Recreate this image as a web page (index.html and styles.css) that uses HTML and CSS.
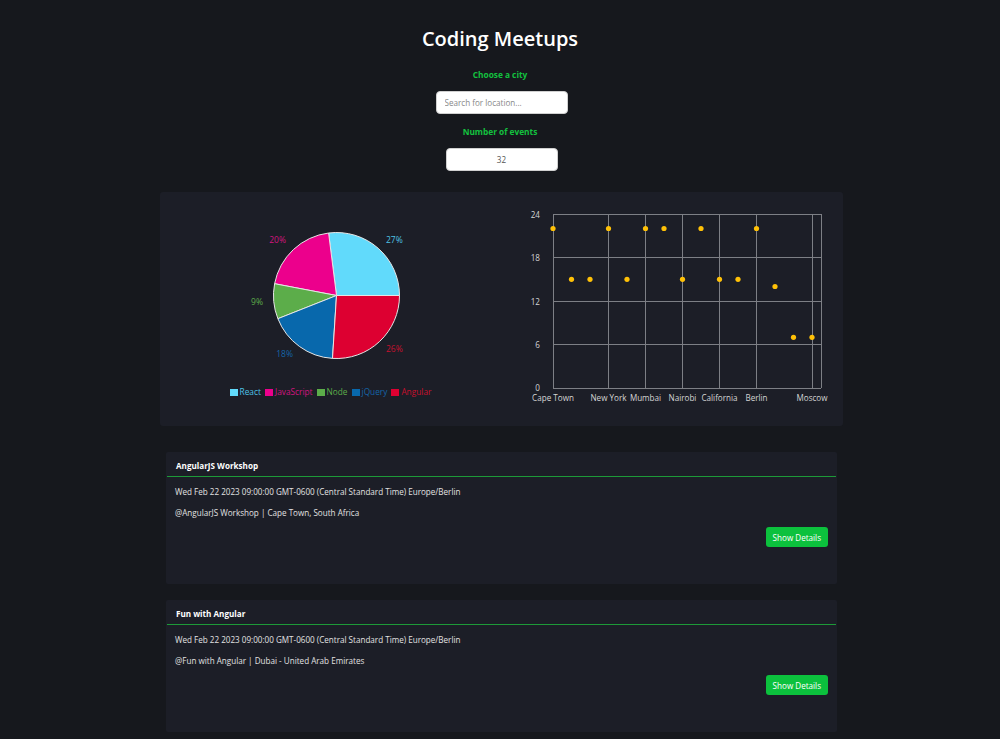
FILE: index.html
```html
<!DOCTYPE html>
<html lang="en">
<head>
<meta charset="utf-8">
<title>Coding Meetups</title>
<link rel="stylesheet" href="styles.css">
</head>
<body>
<div class="app">
  <h1 class="title">Coding Meetups</h1>

  <div class="filter">
    <label class="filter-label" for="city">Choose a city</label>
    <input id="city" class="city-input" type="text" placeholder="Search for location...">
  </div>

  <div class="filter">
    <label class="filter-label" for="num">Number of events</label>
    <input id="num" class="num-input" type="text" value="32">
  </div>

  <section class="charts">
    <div class="chart-col pie-col">
      <svg class="pie-svg" width="341" height="192" viewBox="0 0 341 192">
        <g stroke="#e6e6e6" stroke-width="1">
          <path d="M176.5 103.5 L239.5 103.5 A63 63 0 0 0 168.6 41 Z" fill="#61dafb"/>
          <path d="M176.5 103.5 L168.6 41 A63 63 0 0 0 114.6 91.7 Z" fill="#ec008c"/>
          <path d="M176.5 103.5 L114.6 91.7 A63 63 0 0 0 117.9 126.7 Z" fill="#5cad4a"/>
          <path d="M176.5 103.5 L117.9 126.7 A63 63 0 0 0 172.5 166.4 Z" fill="#0868ac"/>
          <path d="M176.5 103.5 L172.5 166.4 A63 63 0 0 0 239.5 103.5 Z" fill="#dd0031"/>
        </g>
        <g class="pie-labels">
          <text x="226" y="47" fill="#4fc3e6">27%</text>
          <text x="126" y="47" text-anchor="end" fill="#d2147f">20%</text>
          <text x="103" y="109" text-anchor="end" fill="#5cad4a">9%</text>
          <text x="133" y="161" text-anchor="end" fill="#1565a8">18%</text>
          <text x="226" y="156" fill="#c8102e">26%</text>
        </g>
      </svg>
      <ul class="legend">
        <li class="legend-item react"><span class="swatch"></span>React</li>
        <li class="legend-item js"><span class="swatch"></span>JavaScript</li>
        <li class="legend-item node"><span class="swatch"></span>Node</li>
        <li class="legend-item jq"><span class="swatch"></span>jQuery</li>
        <li class="legend-item ng"><span class="swatch"></span>Angular</li>
      </ul>
    </div>

    <div class="chart-col scatter-col">
      <svg class="scatter-svg" width="342" height="234" viewBox="0 0 342 234">
        <g class="grid" stroke="#7d7f85" stroke-width="1" fill="none">
          <line x1="52" y1="22.5" x2="320" y2="22.5"/>
          <line x1="52" y1="65.5" x2="320" y2="65.5"/>
          <line x1="52" y1="109.5" x2="320" y2="109.5"/>
          <line x1="52" y1="152.5" x2="320" y2="152.5"/>
          <line x1="107.5" y1="22" x2="107.5" y2="196"/>
          <line x1="144.5" y1="22" x2="144.5" y2="196"/>
          <line x1="181.5" y1="22" x2="181.5" y2="196"/>
          <line x1="218.5" y1="22" x2="218.5" y2="196"/>
          <line x1="255.5" y1="22" x2="255.5" y2="196"/>
          <line x1="311.5" y1="22" x2="311.5" y2="196"/>
          <line x1="320.5" y1="22" x2="320.5" y2="196"/>
          <line x1="52.5" y1="22" x2="52.5" y2="196"/>
          <line x1="52" y1="196.5" x2="320" y2="196.5"/>
        </g>
        <g class="y-ticks" text-anchor="end">
          <text x="39" y="25.5">24</text>
          <text x="39" y="69">18</text>
          <text x="39" y="112.5">12</text>
          <text x="39" y="156">6</text>
          <text x="39" y="198.5">0</text>
        </g>
        <g class="x-ticks" text-anchor="middle">
          <text x="52" y="205">Cape Town</text>
          <text x="107.5" y="205">New York</text>
          <text x="144.5" y="205">Mumbai</text>
          <text x="181.5" y="205">Nairobi</text>
          <text x="218.5" y="205">California</text>
          <text x="255.5" y="205">Berlin</text>
          <text x="311" y="205">Moscow</text>
        </g>
        <g class="dots" fill="#ffc107">
          <circle cx="52" cy="36.5" r="2.6"/>
          <circle cx="70.5" cy="87.3" r="2.6"/>
          <circle cx="89" cy="87.3" r="2.6"/>
          <circle cx="107.5" cy="36.5" r="2.6"/>
          <circle cx="126" cy="87.3" r="2.6"/>
          <circle cx="144.5" cy="36.5" r="2.6"/>
          <circle cx="163" cy="36.5" r="2.6"/>
          <circle cx="181.5" cy="87.3" r="2.6"/>
          <circle cx="200" cy="36.5" r="2.6"/>
          <circle cx="218.5" cy="87.3" r="2.6"/>
          <circle cx="237" cy="87.3" r="2.6"/>
          <circle cx="255.5" cy="36.5" r="2.6"/>
          <circle cx="274" cy="94.5" r="2.6"/>
          <circle cx="292.5" cy="145.3" r="2.6"/>
          <circle cx="311" cy="145.3" r="2.6"/>
        </g>
      </svg>
    </div>
  </section>

  <ul class="events">
    <li class="event">
      <h2 class="event-title">AngularJS Workshop</h2>
      <p class="event-date">Wed Feb 22 2023 09:00:00 GMT-0600 (Central Standard Time) Europe/Berlin</p>
      <p class="event-loc">@AngularJS Workshop | Cape Town, South Africa</p>
      <div class="event-actions"><button class="details-btn">Show Details</button></div>
    </li>
    <li class="event">
      <h2 class="event-title">Fun with Angular</h2>
      <p class="event-date">Wed Feb 22 2023 09:00:00 GMT-0600 (Central Standard Time) Europe/Berlin</p>
      <p class="event-loc">@Fun with Angular | Dubai - United Arab Emirates</p>
      <div class="event-actions"><button class="details-btn">Show Details</button></div>
    </li>
  </ul>
</div>
</body>
</html>
```

FILE: styles.css
```css
html, body {
  margin: 0;
  padding: 0;
  background: #16181d;
}

body {
  font-family: "Open Sans", "Noto Sans", sans-serif;
  color: #e4e4e4;
  overflow: hidden;
}

.app {
  display: flex;
  flex-direction: column;
  align-items: center;
  padding-top: 25px;
}

.title {
  margin: 0;
  font-size: 20px;
  line-height: 28px;
  font-weight: 600;
  color: #ffffff;
}

.filter {
  display: flex;
  flex-direction: column;
  align-items: center;
}

.filter-label {
  margin-top: 12px;
  font-size: 8.3px;
  line-height: 12px;
  font-weight: 700;
  color: #13c13f;
}

.filter:first-of-type .filter-label {
  margin-top: 16px;
}

.city-input,
.num-input {
  box-sizing: border-box;
  height: 23px;
  margin-top: 10px;
  border: 1px solid #d0d0d0;
  border-radius: 4px;
  background: #ffffff;
  font-family: inherit;
  font-size: 8.1px;
  color: #555;
  outline: none;
}

.city-input {
  width: 132px;
  padding: 0 8px;
  margin-left: 3px;
}

.city-input::placeholder {
  color: #888;
}

.num-input {
  width: 112px;
  margin-left: 3px;
  text-align: center;
  padding: 0;
}

.charts {
  display: flex;
  width: 683px;
  height: 234px;
  margin-top: 21px;
  margin-left: 3px;
  background: #1c1e27;
  border-radius: 3px;
}

.chart-col {
  display: flex;
  flex-direction: column;
}

.pie-col {
  width: 341px;
}

.scatter-col {
  width: 342px;
}

.pie-svg,
.scatter-svg {
  display: block;
}

.pie-labels text {
  font-size: 8.5px;
  dominant-baseline: central;
}

.legend {
  display: flex;
  justify-content: center;
  gap: 4px;
  margin: 0;
  padding: 0 0 0 0;
  list-style: none;
  font-size: 8.3px;
  line-height: 16px;
}

.legend-item {
  display: flex;
  align-items: center;
}

.swatch {
  width: 8px;
  height: 7px;
  margin-right: 2px;
}

.react { color: #4fc3e6; }
.react .swatch { background: #61dafb; }
.js { color: #d2147f; }
.js .swatch { background: #ec008c; }
.node { color: #5cad4a; }
.node .swatch { background: #5cad4a; }
.jq { color: #1565a8; }
.jq .swatch { background: #0868ac; }
.ng { color: #c8102e; }
.ng .swatch { background: #dd0031; }

.scatter-svg text {
  font-size: 8.1px;
  fill: #d5d5d5;
  font-family: "Open Sans", "Noto Sans", sans-serif;
}

.x-ticks text {
  dominant-baseline: central;
}

.events {
  display: flex;
  flex-direction: column;
  gap: 16px;
  width: 671px;
  margin: 26px 0 0 3px;
  padding: 0;
  list-style: none;
}

.event {
  box-sizing: border-box;
  height: 132px;
  padding: 0 1px;
  background: #1c1e27;
  border-radius: 2px;
}

.event-title {
  margin: 0;
  padding: 8px 9px 4px;
  font-size: 8.1px;
  line-height: 12px;
  font-weight: 700;
  color: #ffffff;
  border-bottom: 1.5px solid #1d9a38;
}

.event-date,
.event-loc {
  margin: 0;
  padding: 0 8px;
  font-size: 8.1px;
  line-height: 12px;
  color: #e2e2e2;
}

.event-date {
  margin-top: 9px;
}

.event-loc {
  margin-top: 9px;
}

.event-actions {
  display: flex;
  justify-content: flex-end;
  padding-right: 8px;
  margin-top: 8px;
}

.details-btn {
  height: 20px;
  padding: 0 7px;
  border: none;
  border-radius: 3px;
  background: #0cc13d;
  color: #ffffff;
  font-family: inherit;
  font-size: 8.1px;
  cursor: pointer;
}
```
